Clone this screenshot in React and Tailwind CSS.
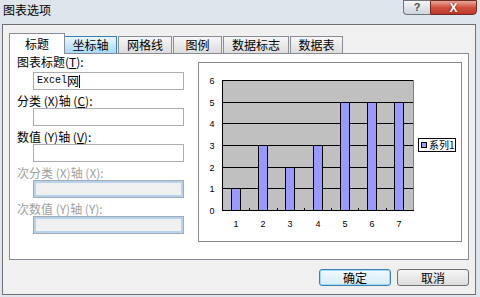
import React from "react";

const values = [1, 3, 2, 3, 5, 5, 5];

const tabs = [
  { label: "坐标轴", w: "w-[52px]", hover: true },
  { label: "网格线", w: "w-[54px]" },
  { label: "图例", w: "w-[49px]" },
  { label: "数据标志", w: "w-[66px]" },
  { label: "数据表", w: "w-[53px]" },
];

function Chart() {
  const x0 = 23;
  const x1 = 214;
  const y0 = 17;
  const y1 = 147;
  const cw = (x1 - x0) / 7;
  const unit = (y1 - y0) / 6;
  const gy = (k) => Math.round(y1 - k * unit) + 0.5;

  return (
    <svg width="262" height="178" className="block" shapeRendering="crispEdges">
      <rect x={x0 + 0.5} y={y0 + 0.5} width={x1 - x0} height={y1 - y0} fill="#c0c0c0" stroke="#808080" />
      {[1, 2, 3, 4, 5, 6].map((k) => (
        <line key={k} x1={x0} x2={x1} y1={gy(k)} y2={gy(k)} stroke="#000" />
      ))}
      {values.map((v, i) => {
        const cx = Math.round(x0 + cw * (i + 0.5));
        const top = gy(v);
        return (
          <rect key={i} x={cx - 4.5} y={top} width="9" height={y1 + 0.5 - top} fill="#9999ff" stroke="#000" />
        );
      })}
      <line x1={x0 + 0.5} x2={x0 + 0.5} y1={y0} y2={y1 + 1} stroke="#000" />
      <line x1={x0} x2={x1 + 1} y1={y1 + 0.5} y2={y1 + 0.5} stroke="#000" />
      {[1, 2, 3, 4, 5, 6].map((i) => {
        const x = Math.round(x0 + cw * i) + 0.5;
        return <line key={i} x1={x} x2={x} y1={y1 - 2} y2={y1} stroke="#000" />;
      })}
      <g fontFamily="'Liberation Sans', sans-serif" fontSize="9" fill="#000" textAnchor="middle" shapeRendering="auto">
        {[0, 1, 2, 3, 4, 5, 6].map((k) => (
          <text key={k} x="13" y={gy(k) + 3}>
            {k}
          </text>
        ))}
        {values.map((_, i) => (
          <text key={i} x={Math.round(x0 + cw * (i + 0.5))} y="164">
            {i + 1}
          </text>
        ))}
      </g>
      <rect x="219.5" y="75.5" width="37" height="13" fill="#fff" stroke="#000" />
      <rect x="222.5" y="79.5" width="5" height="5" fill="#9999ff" stroke="#000" />
      <text x="230" y="86" fontSize="10" fontFamily="'Noto Sans CJK SC', sans-serif" fill="#000" shapeRendering="auto">
        系列1
      </text>
    </svg>
  );
}

function Field({ label, first, disabled, children }) {
  return (
    <div>
      <div
        className={`h-[18px] leading-[14px] whitespace-pre ${first ? "pt-[1px]" : "pt-[4px]"} ${
          disabled ? "text-[#a0a0a0]" : "text-black"
        }`}
      >
        {label}
      </div>
      {disabled ? (
        <div className="ml-[16px] w-[151px] h-[18px] border border-[#a2acb8] bg-[#f0f0f0] shadow-[inset_0_0_0_2px_#b9d2ec]" />
      ) : (
        <div className="ml-[16px] w-[151px] h-[18px] border border-[#abadb3] bg-white flex items-center pl-[3px]">
          {children}
        </div>
      )}
    </div>
  );
}

export default function App() {
  return (
    <div className="w-[480px] h-[297px] overflow-hidden bg-[#dfe5ec] text-[12px] text-black font-['Noto_Sans_CJK_SC',sans-serif]">
      <div className="h-[24px] flex items-start">
        <div className="pl-[3px] pt-[2px] leading-[16px] text-[12px]">图表选项</div>
        <div className="ml-auto mr-[3px] flex">
          <div className="w-[27px] h-[15px] border border-[#6f7378] border-r-0 rounded-bl-[4px] bg-gradient-to-b from-[#f4f6f8] to-[#cfd5dc] flex items-center justify-center text-[11px] leading-none font-bold text-[#4a4f55] font-['Liberation_Sans',sans-serif]">
            ?
          </div>
          <div className="w-[47px] h-[15px] border border-[#6b2a22] rounded-br-[4px] bg-gradient-to-b from-[#e9a99c] via-[#d0503c] to-[#c0392b] flex items-center justify-center text-[12px] leading-none font-bold text-white font-['Liberation_Sans',sans-serif] [text-shadow:0_0_2px_#5a1a10]">
            X
          </div>
        </div>
      </div>

      <div className="ml-[2px] w-[474px] h-[271px] border border-[#707070] bg-[#f0f0f0] pt-[8px] px-[6px]">
        <div className="h-[20px] flex items-end">
          <div className="relative z-10 w-[56px] h-[21px] -mb-px bg-white border border-b-0 border-[#898c95] flex justify-center pt-[2px] leading-[16px]">
            标题
          </div>
          {tabs.map((t, i) => (
            <div
              key={t.label}
              className={`${t.w} h-[17px] ${i > 0 ? "ml-px" : ""} border border-b-0 flex justify-center leading-[16px] ${
                t.hover
                  ? "border-[#3c7fb1] bg-gradient-to-b from-[#eaf6fd] to-[#a7d9f5] border-l-0"
                  : "border-[#898c95] bg-gradient-to-b from-[#f7f7f7] to-[#dcdcdc]"
              }`}
            >
              {t.label}
            </div>
          ))}
        </div>

        <div className="w-[460px] h-[207px] border border-[#898c95] bg-white flex">
          <div className="w-[188px] pl-[7px] font-['Noto_Sans_CJK_SC',sans-serif]">
            <Field first label={<>图表标题(<u>T</u>):</>}>
              <span className="font-['Liberation_Mono',monospace] text-[10px] leading-[14px]">Excel</span>
              <span className="text-[12px] leading-[14px]">网</span>
              <span className="w-px h-[13px] bg-black" />
            </Field>
            <Field label={<>分类 (X)轴 (<u>C</u>):</>} />
            <Field label={<>数值 (Y)轴 (<u>V</u>):</>} />
            <Field disabled label={<>次分类 (X)轴 (X):</>} />
            <Field disabled label={<>次数值 (Y)轴 (Y):</>} />
          </div>
          <div className="mt-[8px] w-[264px] h-[180px] border border-[#888888] bg-white">
            <Chart />
          </div>
        </div>

        <div className="w-[460px] mt-[9px] flex justify-end gap-[6px]">
          <div className="w-[72px] h-[17px] rounded-[3px] border border-[#3c7fb1] bg-gradient-to-b from-[#f2f9fd] to-[#d6ecf8] shadow-[inset_0_0_0_1px_#9fdbf8] flex items-center justify-center leading-none">
            确定
          </div>
          <div className="w-[72px] h-[17px] rounded-[3px] border border-[#707070] bg-gradient-to-b from-[#f6f6f6] to-[#dddddd] flex items-center justify-center leading-none">
            取消
          </div>
        </div>
      </div>
    </div>
  );
}
